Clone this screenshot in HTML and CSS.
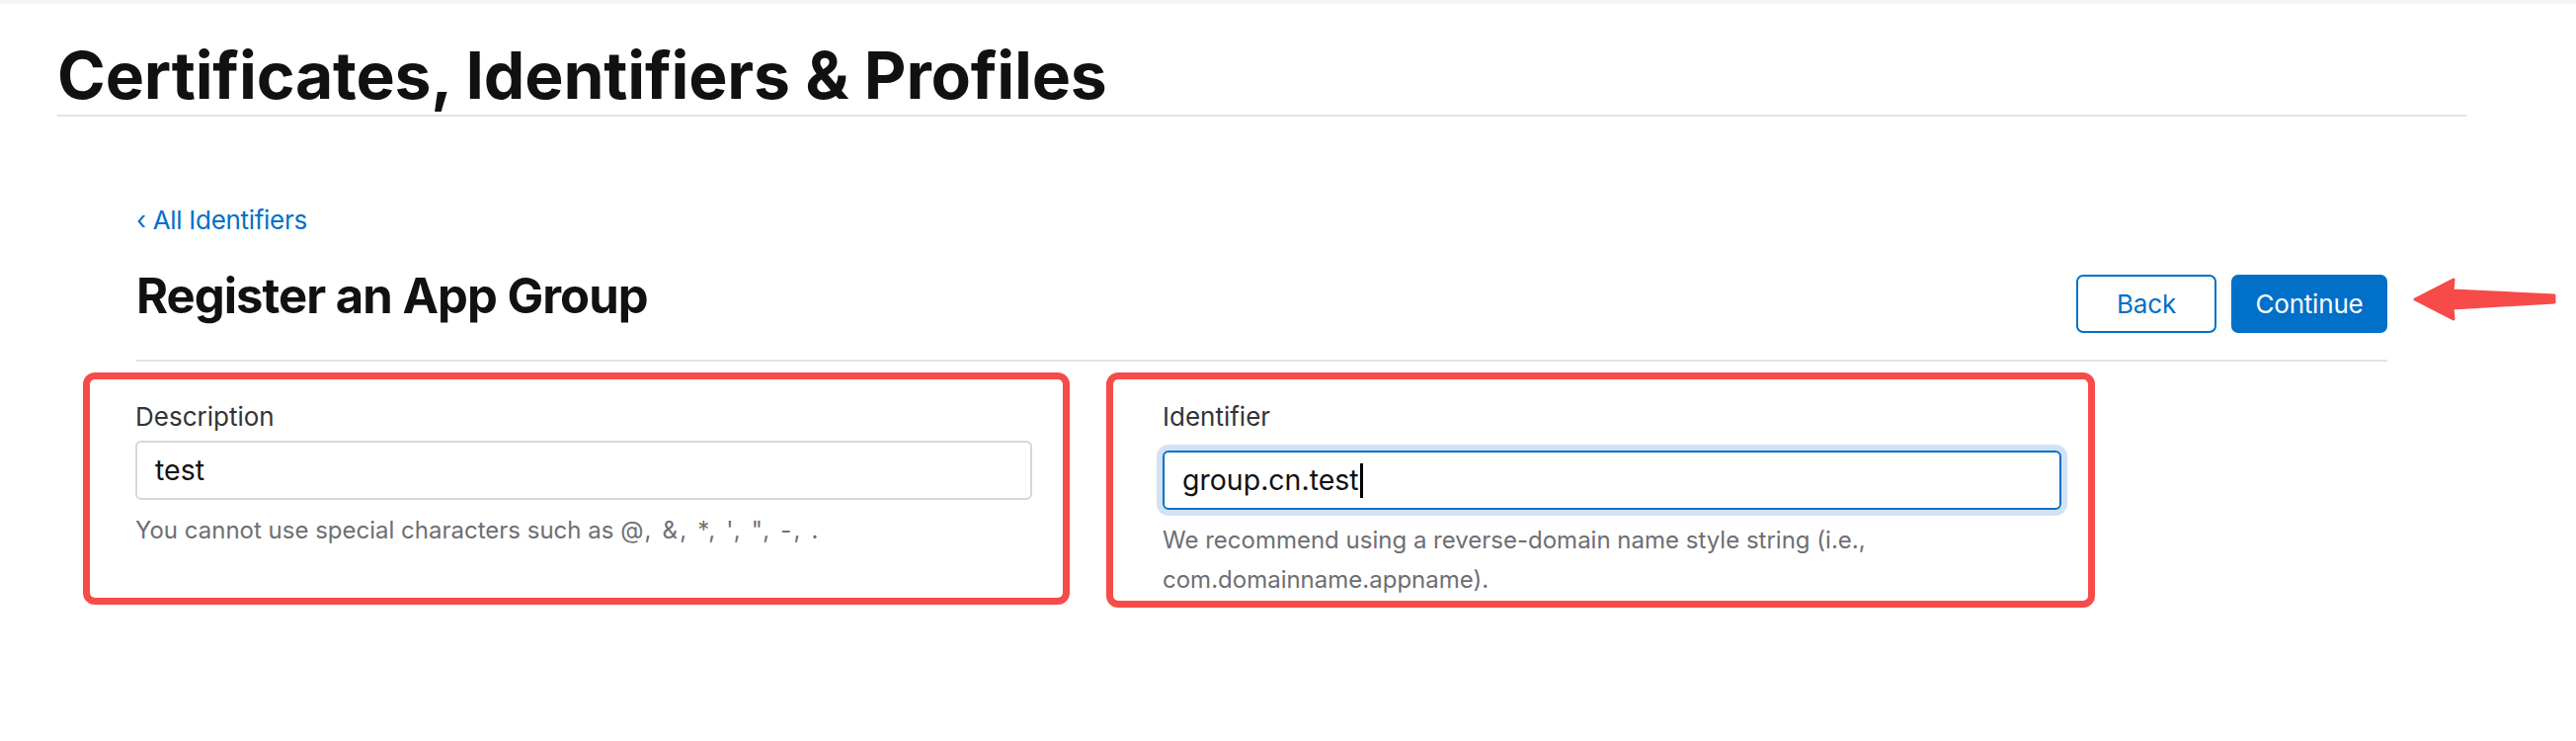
FILE: index.html
```html
<!DOCTYPE html>
<html lang="en">
<head>
<meta charset="UTF-8">
<meta name="viewport" content="width=device-width, initial-scale=1.0">
<title>Register an App Group</title>
<link rel="stylesheet" href="styles.css">
</head>
<body>
<div class="topbar"></div>
<header class="page-header">
  <h1>Certificates, Identifiers &amp; Profiles</h1>
</header>
<main class="content">
  <a class="back-link" href="#">&lsaquo; All Identifiers</a>
  <div class="title-row">
    <h2>Register an App Group</h2>
    <div class="actions">
      <button class="btn btn-outline btn-back">Back</button>
      <button class="btn btn-primary btn-continue">Continue</button>
      <svg class="arrow" width="150" height="50" viewBox="0 0 150 50">
        <polygon points="5,25 44,5 43,16 146,21 146,28 43,34 44,45" fill="#f64b48" stroke="#f64b48" stroke-width="3" stroke-linejoin="round"/>
      </svg>
    </div>
  </div>
  <div class="fields">
    <div class="field field-desc">
      <label>Description</label>
      <div class="input">test</div>
      <p class="hint">You cannot use special characters such as <span class="chars">@, &amp;, *, ', ", -, .</span></p>
    </div>
    <div class="field field-id">
      <label>Identifier</label>
      <div class="input focused">group.cn.test<span class="caret"></span></div>
      <p class="hint">We recommend using a reverse-domain name style string (i.e., com.domainname.appname).</p>
    </div>
  </div>
</main>
</body>
</html>
```

FILE: styles.css
```css
body {
    margin: 0;
    padding: 0;
    background-color: #fff;
    font-family: Inter, "Noto Sans", sans-serif;
    color: #1d1d1f;
}
.topbar {
    height: 4px;
    background-color: #f5f5f7;
}
.page-header {
    margin-left: 58px;
    width: 2439px;
    padding-top: 32px;
}
.page-header h1 {
    margin: 0;
    font-size: 66px;
    line-height: 80px;
    font-weight: 700;
    letter-spacing: -0.003em;
    color: #111;
    border-bottom: 2px solid #e3e3e3;
}
.content {
    margin-left: 138px;
    width: 2279px;
    padding-top: 89px;
}
.back-link {
    display: block;
    font-size: 26px;
    line-height: 32px;
    letter-spacing: -0.3px;
    color: #0070c9;
    text-decoration: none;
}
.title-row {
    display: flex;
    justify-content: space-between;
    align-items: flex-start;
    margin-top: 31px;
    padding-bottom: 27px;
    border-bottom: 2px solid #e3e3e3;
}
.title-row h2 {
    margin: 0;
    font-size: 49px;
    line-height: 60px;
    font-weight: 700;
    letter-spacing: -0.02em;
    color: #111;
}
.actions {
    position: relative;
    display: flex;
    gap: 15px;
    margin-top: 8px;
}
.btn {
    height: 59px;
    padding: 0;
    font-family: Inter, "Noto Sans", sans-serif;
    font-size: 26px;
    letter-spacing: -0.2px;
    border-radius: 7px;
    box-sizing: border-box;
    cursor: pointer;
}
.btn-back {
    width: 142px;
}
.btn-continue {
    width: 158px;
}
.btn-outline {
    background-color: #fff;
    color: #0070c9;
    border: 2px solid #0070c9;
}
.btn-primary {
    background-color: #0070c9;
    color: #fff;
    border: 2px solid #0070c9;
}
.arrow {
    position: absolute;
    left: 100%;
    top: 0;
    margin-left: 23px;
}
.fields {
    display: flex;
    gap: 37px;
    margin-left: -54px;
    margin-top: 11px;
    align-items: flex-start;
}
.field {
    box-sizing: border-box;
    border: 7px solid #f64b48;
    border-radius: 12px;
    padding-top: 22px;
}
.field-desc {
    width: 999px;
    height: 235px;
    padding-left: 46px;
}
.field-id {
    width: 1001px;
    height: 238px;
    padding-left: 50px;
}
.field label {
    display: block;
    font-size: 26px;
    line-height: 32px;
    color: #333336;
    margin-bottom: 8px;
}
.input {
    box-sizing: border-box;
    height: 60px;
    width: 908px;
    padding-left: 18px;
    border: 2px solid #d6d6d6;
    border-radius: 6px;
    font-size: 28.5px;
    line-height: 56px;
    color: #111;
    display: flex;
    align-items: center;
}
.input.focused {
    width: 910px;
    margin-top: 18px;
    border-color: #0070c9;
    box-shadow: 0 0 0 6px #d3e3f5;
}
.caret {
    display: inline-block;
    width: 3px;
    height: 35px;
    background-color: #000;
    margin-left: 1px;
}
.hint {
    margin: 11px 0 0;
    max-width: 780px;
    font-size: 24px;
    line-height: 40px;
    color: #6e6e73;
}
.chars {
    letter-spacing: 2.2px;
}
```
